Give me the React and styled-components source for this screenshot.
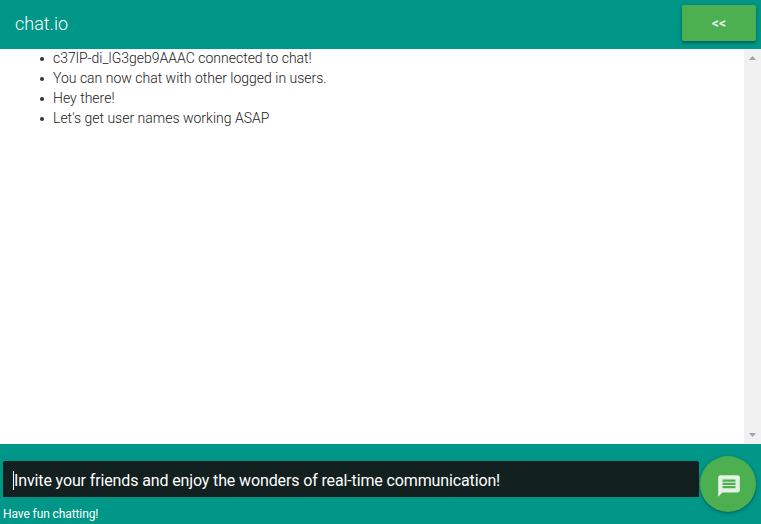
import React from "react";
import styled, { createGlobalStyle } from "styled-components";

const GlobalStyle = createGlobalStyle`
  * { box-sizing: border-box; }
  body { margin: 0; font-family: Roboto, "Liberation Sans", sans-serif; }
`;

const Page = styled.div`
  display: flex;
  flex-direction: column;
  width: 100%;
  height: 100vh;
  overflow: hidden;
  background: #009688;
`;

const Header = styled.header`
  display: flex;
  align-items: flex-start;
  justify-content: space-between;
  flex: 0 0 49px;
  padding: 5px 5px 0 15px;
`;

const Title = styled.h1`
  margin: 6px 0 0;
  font-size: 18px;
  font-weight: 300;
  line-height: 26px;
  color: #fff;
`;

const BackButton = styled.button`
  width: 74px;
  height: 36px;
  padding: 0;
  border: 0;
  border-radius: 2px;
  background: #4caf50;
  color: rgba(255, 255, 255, 0.84);
  font: 700 14px/36px Roboto, sans-serif;
  box-shadow: 0 1px 5px rgba(0, 0, 0, 0.2), 0 2px 2px rgba(0, 0, 0, 0.22);
`;

const Conversation = styled.main`
  display: flex;
  flex: 1;
  min-height: 0;
  background: #fff;
`;

const Messages = styled.ul`
  flex: 1;
  margin: -1px 0 0;
  padding: 0 0 0 53px;
  list-style: none;
`;

const Message = styled.li`
  display: flex;
  align-items: center;
  height: 20px;
  font-size: 14px;
  font-weight: 300;
  line-height: 20px;
  letter-spacing: 0;
  color: #212121;

  &::before {
    content: "";
    width: 4px;
    height: 4px;
    margin: 2px 9px 0 -13px;
    border-radius: 50%;
    background: #333;
  }
`;

const Scrollbar = styled.div`
  display: flex;
  flex-direction: column;
  justify-content: space-between;
  align-items: center;
  width: 17px;
  padding: 7px 0;
  background: #f1f1f1;
`;

const Arrow = styled.svg`
  display: block;
  width: 7px;
  height: 4px;
  fill: #a3a3a3;
`;

const Footer = styled.footer`
  display: flex;
  align-items: flex-start;
  flex: 0 0 80px;
  padding: 12px 5px 0 3px;
`;

const Composer = styled.div`
  flex: 1;
  padding-top: 5px;
`;

const MessageField = styled.div`
  display: flex;
  align-items: center;
  height: 36px;
  padding: 2px 0 0 10px;
  border-radius: 2px 2px 0 0;
  background: #12201f;
  color: #fff;
  font-size: 16px;
  letter-spacing: -0.13px;
  white-space: nowrap;
`;

const Caret = styled.span`
  width: 1px;
  height: 19px;
  background: #fff;
`;

const Hint = styled.p`
  margin: 9px 0 0;
  font-size: 12px;
  line-height: 16px;
  letter-spacing: -0.1px;
  color: #fff;
`;

const SendButton = styled.button`
  display: flex;
  align-items: center;
  justify-content: center;
  width: 56px;
  height: 56px;
  margin-left: 1px;
  padding: 3px 0 0 2px;
  border: 0;
  border-radius: 50%;
  background: #4caf50;
  box-shadow: 0 1px 4px rgba(0, 0, 0, 0.22), 0 1px 2px rgba(0, 0, 0, 0.2);
`;

const ChatIcon = styled.svg`
  width: 26px;
  height: 26px;
  fill: rgba(255, 255, 255, 0.84);
`;

const messages = [
  "c37lP-di_lG3geb9AAAC connected to chat!",
  "You can now chat with other logged in users.",
  "Hey there!",
  "Let's get user names working ASAP",
];

export default function App() {
  return (
    <Page>
      <GlobalStyle />
      <Header>
        <Title>chat.io</Title>
        <BackButton>&lt;&lt;</BackButton>
      </Header>
      <Conversation>
        <Messages>
          {messages.map((text) => (
            <Message key={text}>{text}</Message>
          ))}
        </Messages>
        <Scrollbar>
          <Arrow viewBox="0 0 7 4"><path d="M0 4 3.5 0 7 4z" /></Arrow>
          <Arrow viewBox="0 0 7 4"><path d="M0 0h7L3.5 4z" /></Arrow>
        </Scrollbar>
      </Conversation>
      <Footer>
        <Composer>
          <MessageField>
            <Caret />
            Invite your friends and enjoy the wonders of real-time communication!
          </MessageField>
          <Hint>Have fun chatting!</Hint>
        </Composer>
        <SendButton aria-label="Send">
          <ChatIcon viewBox="0 0 24 24">
            <path d="M20 2H4c-1.1 0-1.99.9-1.99 2L2 22l4-4h14c1.1 0 2-.9 2-2V4c0-1.1-.9-2-2-2zm-2 12H6v-2h12v2zm0-3H6V9h12v2zm0-3H6V6h12v2z" />
          </ChatIcon>
        </SendButton>
      </Footer>
    </Page>
  );
}
